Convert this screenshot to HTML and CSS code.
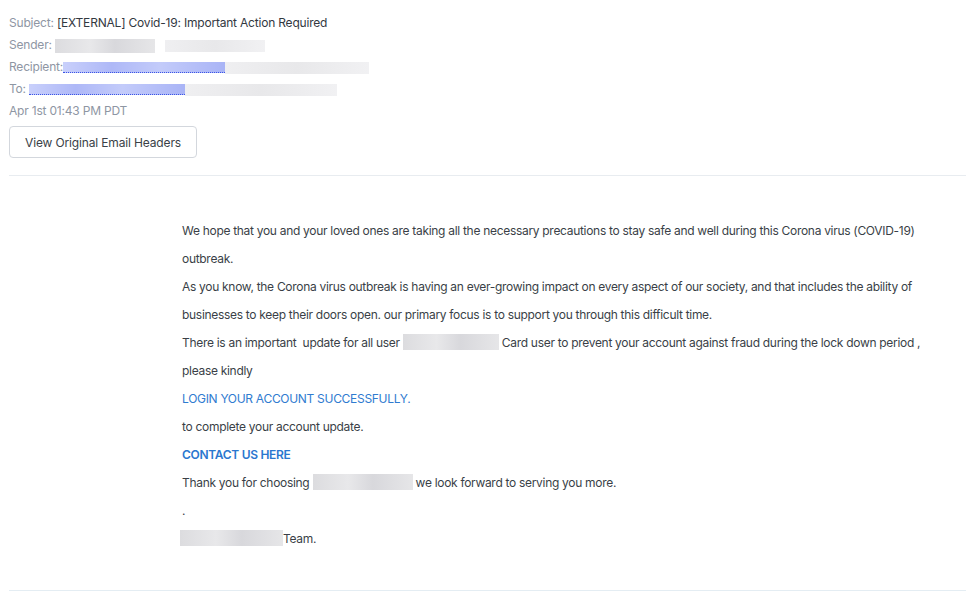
FILE: index.html
```html
<!DOCTYPE html>
<html lang="en">
<head>
  <meta charset="UTF-8">
  <title>Email Preview</title>
  <link rel="stylesheet" href="styles.css">
</head>
<body>
  <div class="email">
    <div class="meta">
      <div class="meta-row"><span class="label">Subject:</span> <span class="value">[EXTERNAL] Covid-19: Important Action Required</span></div>
      <div class="meta-row"><span class="label">Sender:</span> <span class="redact gray" style="width: 100px"></span><span class="redact light" style="width: 100px; margin-left: 10px"></span></div>
      <div class="meta-row"><span class="label">Recipient:</span><span class="redact blue link" style="width: 162px"></span><span class="redact light" style="width: 144px"></span></div>
      <div class="meta-row"><span class="label">To:</span> <span class="redact blue link" style="width: 156px"></span><span class="redact light" style="width: 152px"></span></div>
      <div class="meta-row date">Apr 1st 01:43 PM PDT</div>
      <button class="btn">View Original Email Headers</button>
    </div>

    <div class="body">
      <p>We hope that you and your loved ones are taking all the necessary precautions to stay safe and well during this Corona virus (COVID-19) outbreak.</p>
      <p>As you know, the Corona virus outbreak is having an ever-growing impact on every aspect of our society, and that includes the ability of businesses to keep their doors open. our primary focus is to support you through this difficult time.</p>
      <p>There is an important &nbsp;update for all user <span class="redact gray inline" style="width: 96px"></span> Card user to prevent your account against fraud during the lock down period , please kindly</p>
      <p><a class="link" href="#">LOGIN YOUR ACCOUNT SUCCESSFULLY.</a></p>
      <p>to complete your account update.</p>
      <p><a class="link strong" href="#">CONTACT US HERE</a></p>
      <p>Thank you for choosing <span class="redact gray inline" style="width: 100px"></span> we look forward to serving you more.</p>
      <p>.</p>
      <p class="team"><span class="redact gray inline" style="width: 103px"></span>Team.</p>
    </div>
  </div>
</body>
</html>
```

FILE: styles.css
```css
* {
  margin: 0;
  padding: 0;
  box-sizing: border-box;
}

body {
  background: #ffffff;
  font-family: Inter, 'Noto Sans', sans-serif;
  color: #3a3f47;
}

.email {
  padding: 12px 0 0 9px;
}

.meta {
  padding-bottom: 17px;
  border-bottom: 1px solid #e8ecf0;
}

.meta-row {
  font-size: 12px;
  line-height: 22px;
  height: 22px;
  letter-spacing: -0.2px;
}

.label {
  color: #8e96a3;
}

.value {
  color: #33383f;
}

.date {
  color: #8e96a3;
}

.redact {
  display: inline-block;
  height: 14px;
  vertical-align: middle;
}

.redact.gray {
  background: linear-gradient(90deg, #dcdcdf 0%, #e8e8ea 35%, #d8d8dc 60%, #e6e6e8 100%);
}

.redact.light {
  background: linear-gradient(90deg, #efeff1 0%, #e8e8ea 50%, #f1f1f3 100%);
  height: 12px;
}

.redact.blue {
  background: linear-gradient(90deg, #c9d0fb 0%, #aeb8f7 30%, #c3cbfa 60%, #a9b4f6 100%);
  height: 11px;
}

.redact.link {
  border-bottom: 1px dotted #3b55e6;
}

.redact.inline {
  vertical-align: -3px;
  height: 16px;
}

.btn {
  margin-top: 4px;
  font-family: Inter, 'Noto Sans', sans-serif;
  font-size: 12px;
  letter-spacing: -0.15px;
  color: #3a3f47;
  background: #ffffff;
  border: 1px solid #d3d7dd;
  border-radius: 4px;
  width: 188px;
  height: 32px;
}

.body {
  padding: 41px 40px 37px 173px;
  border-bottom: 1px solid #e4edf3;
  max-width: 957px;
}

.body p {
  font-size: 12px;
  line-height: 28px;
  letter-spacing: -0.3px;
  color: #3a3f47;
}

.body p.team {
  margin-left: -2px;
}

.link {
  color: #2f7bd0;
  text-decoration: none;
}

.link.strong {
  font-weight: 600;
  color: #2a77cf;
}
```
